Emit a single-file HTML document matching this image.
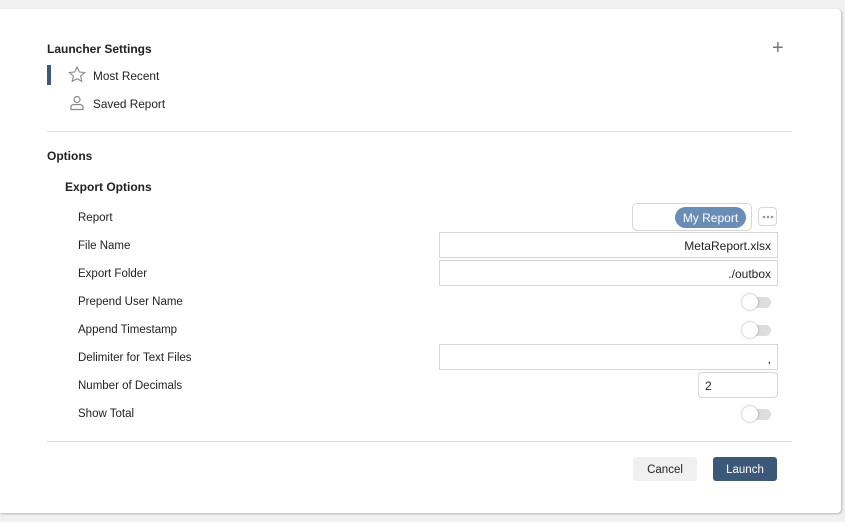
<!DOCTYPE html>
<html><head><style>
body{margin:0;width:845px;height:522px;background:#f1f1f1;font-family:"Liberation Sans",sans-serif;font-size:11.5px;color:#222;position:relative;overflow:hidden}
.card{position:absolute;left:0;top:9px;width:841px;height:504px;background:#fff;border-radius:0 4px 4px 0;box-shadow:1px 1px 2px rgba(0,0,0,.25)}
.a{position:absolute}
.b{font-weight:bold}
.hr{position:absolute;left:47px;width:745px;height:1px;background:#ddd}
.in{position:absolute;border:1px solid #d6d6d6;background:#fff;box-sizing:border-box;text-align:right;padding-right:6px;font-size:12px}
.tg{position:absolute;width:28px;height:11px;border-radius:6px;background:#ddd}
.tg:before{content:"";position:absolute;left:-1px;top:-3px;width:16px;height:16px;border-radius:50%;background:#fff;box-shadow:0 0 2px rgba(0,0,0,.4)}
.lbl{position:absolute;left:78px}
</style></head><body>
<div class="card"></div>
<div class="a b" style="left:47px;top:42px;font-size:12px">Launcher Settings</div>
<div class="a" style="left:772px;top:37px;font-size:20px;color:#777;font-weight:300">+</div>
<div class="a" style="left:47px;top:65px;width:4px;height:20px;background:#3f5877"></div>
<svg class="a" style="left:68px;top:66px" width="18" height="17" viewBox="0 0 18 17"><path d="M9 1l2.3 5 5.4.5-4.1 3.6 1.2 5.3L9 12.6 4.2 15.4l1.2-5.3L1.3 6.5 6.7 6z" fill="none" stroke="#888" stroke-width="1.1"/></svg>
<div class="a" style="left:93px;top:69px;font-size:11.8px">Most Recent</div>
<svg class="a" style="left:69px;top:95px" width="16" height="16" viewBox="0 0 16 16"><circle cx="8" cy="4.5" r="3" fill="none" stroke="#888" stroke-width="1.2"/><path d="M2 14.5v-2.5c0-1.5 1.5-2.5 3-2.5h6c1.5 0 3 1 3 2.5v2.5z" fill="none" stroke="#888" stroke-width="1.2"/></svg>
<div class="a" style="left:93px;top:97px;font-size:11.8px">Saved Report</div>
<div class="hr" style="top:131px"></div>
<div class="a b" style="left:47px;top:149px;font-size:12px">Options</div>
<div class="a b" style="left:65px;top:180px;font-size:12px">Export Options</div>
<div class="lbl" style="top:212px">Report</div>
<div class="lbl" style="top:240px">File Name</div>
<div class="lbl" style="top:268px">Export Folder</div>
<div class="lbl" style="top:296px">Prepend User Name</div>
<div class="lbl" style="top:324px">Append Timestamp</div>
<div class="lbl" style="top:352px">Delimiter for Text Files</div>
<div class="lbl" style="top:380px">Number of Decimals</div>
<div class="lbl" style="top:408px">Show Total</div>
<div class="a" style="left:632px;top:203px;width:120px;height:28px;border:1px solid #d6d6d6;border-radius:5px;box-sizing:border-box"></div>
<div class="a" style="left:675px;top:207px;width:71px;height:21px;border-radius:11px;background:#6a8db5;color:#fff;text-align:center;line-height:22px;font-size:12px">My Report</div>
<div class="a" style="left:758px;top:207px;width:19px;height:19px;border:1px solid #d6d6d6;border-radius:4px;box-sizing:border-box"><svg class="a" style="left:3px;top:7px" width="12" height="4"><circle cx="2" cy="2" r="1.3" fill="#999"/><circle cx="6" cy="2" r="1.3" fill="#999"/><circle cx="10" cy="2" r="1.3" fill="#999"/></svg></div>
<div class="in" style="left:439px;top:232px;width:339px;height:26px;line-height:26px">MetaReport.xlsx</div>
<div class="in" style="left:439px;top:260px;width:339px;height:26px;line-height:26px">./outbox</div>
<div class="tg" style="left:743px;top:297px"></div>
<div class="tg" style="left:743px;top:325px"></div>
<div class="in" style="left:439px;top:344px;width:339px;height:26px;line-height:28px">,</div>
<div class="in" style="left:698px;top:372px;width:80px;height:26px;line-height:26px;border-radius:4px;text-align:left;padding-left:6px">2</div>
<div class="tg" style="left:743px;top:409px"></div>
<div class="hr" style="top:441px"></div>
<div class="a" style="left:633px;top:457px;width:64px;height:24px;background:#f0f0f0;border-radius:3px;text-align:center;line-height:27px">Cancel</div>
<div class="a" style="left:713px;top:457px;width:64px;height:24px;background:#3c5878;color:#fff;border-radius:3px;text-align:center;line-height:27px">Launch</div>
</body></html>
